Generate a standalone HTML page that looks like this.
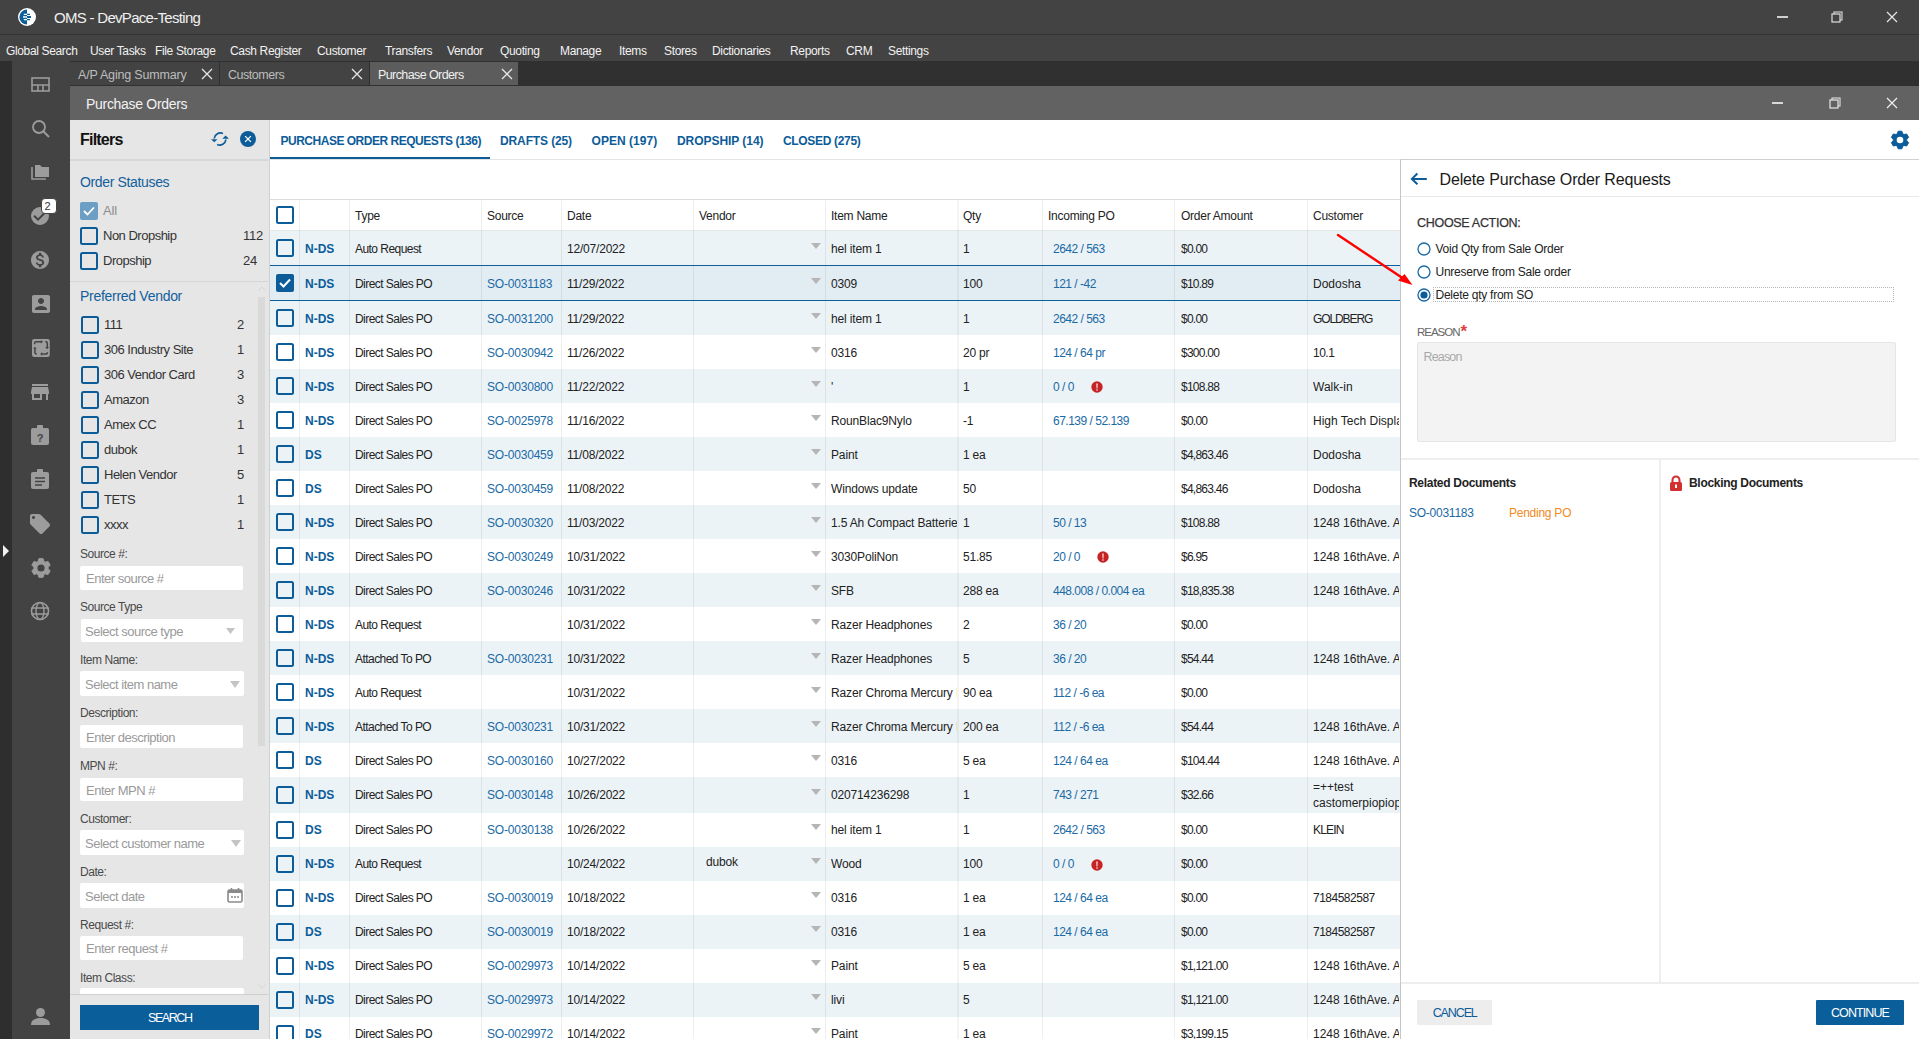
<!DOCTYPE html>
<html><head><meta charset="utf-8"><title>OMS - DevPace-Testing</title>
<style>
html,body{margin:0;padding:0;}
body{width:1919px;height:1039px;position:relative;overflow:hidden;background:#2e2e2e;font-family:"Liberation Sans", sans-serif;}
.r{position:absolute;}
.t{position:absolute;white-space:nowrap;}
svg.r{overflow:visible;}
</style></head><body>
<div class="r" style="left:0px;top:0px;width:1919px;height:34px;background:#434343;"></div>
<div class="r" style="left:0px;top:34px;width:1919px;height:1px;background:#333333;"></div>
<div class="r" style="left:0px;top:35px;width:1919px;height:26px;background:#434343;"></div>
<div class="r" style="left:0px;top:61px;width:12px;height:978px;background:#2e2e2e;"></div>
<div class="r" style="left:12px;top:61px;width:58px;height:978px;background:#434343;"></div>
<div class="r" style="left:70px;top:61px;width:1849px;height:25px;background:#303030;"></div>
<svg class="r" style="left:18px;top:8px" width="18" height="18" viewBox="0 0 18 18"><circle cx="9" cy="9" r="9" fill="#fff"/><path d="M9 1.4A7.6 7.6 0 0 0 9 16.6Z" fill="#0a5e9a"/><path d="M5.8 6.4H9M5 9H9M5.8 11.6H9" stroke="#fff" stroke-width="1.3"/><path d="M9 6.4H12M9 11.6H12" stroke="#0a5e9a" stroke-width="1.3"/><path d="M9 9H13" stroke="#0a5e9a" stroke-width="2"/></svg>
<div class="t" style="left:54px;top:6.5px;height:22px;line-height:22px;font-size:15px;color:#f0f0f0;letter-spacing:-0.7px;">OMS - DevPace-Testing</div>
<div class="r" style="left:1777px;top:16px;width:11px;height:2px;background:#cfcfcf;"></div>
<svg class="r" style="left:1831px;top:11px" width="12" height="12" viewBox="0 0 12 12"><rect x="3" y="1" width="8" height="8" fill="none" stroke="#cfcfcf" stroke-width="1.2"/><rect x="1" y="3" width="8" height="8" fill="#434343" stroke="#e0e0e0" stroke-width="1.2"/></svg>
<svg class="r" style="left:1886px;top:11px" width="12" height="12" viewBox="0 0 12 12"><path d="M1 1L11 11M11 1L1 11" stroke="#e8e8e8" stroke-width="1.2"/></svg>
<div class="t" style="left:6px;top:42.0px;height:18px;line-height:18px;font-size:12px;color:#f2f2f2;letter-spacing:-0.35px;">Global Search</div>
<div class="t" style="left:90px;top:42.0px;height:18px;line-height:18px;font-size:12px;color:#f2f2f2;letter-spacing:-0.35px;">User Tasks</div>
<div class="t" style="left:155px;top:42.0px;height:18px;line-height:18px;font-size:12px;color:#f2f2f2;letter-spacing:-0.35px;">File Storage</div>
<div class="t" style="left:230px;top:42.0px;height:18px;line-height:18px;font-size:12px;color:#f2f2f2;letter-spacing:-0.35px;">Cash Register</div>
<div class="t" style="left:317px;top:42.0px;height:18px;line-height:18px;font-size:12px;color:#f2f2f2;letter-spacing:-0.35px;">Customer</div>
<div class="t" style="left:385px;top:42.0px;height:18px;line-height:18px;font-size:12px;color:#f2f2f2;letter-spacing:-0.35px;">Transfers</div>
<div class="t" style="left:447px;top:42.0px;height:18px;line-height:18px;font-size:12px;color:#f2f2f2;letter-spacing:-0.35px;">Vendor</div>
<div class="t" style="left:500px;top:42.0px;height:18px;line-height:18px;font-size:12px;color:#f2f2f2;letter-spacing:-0.35px;">Quoting</div>
<div class="t" style="left:560px;top:42.0px;height:18px;line-height:18px;font-size:12px;color:#f2f2f2;letter-spacing:-0.35px;">Manage</div>
<div class="t" style="left:619px;top:42.0px;height:18px;line-height:18px;font-size:12px;color:#f2f2f2;letter-spacing:-0.35px;">Items</div>
<div class="t" style="left:664px;top:42.0px;height:18px;line-height:18px;font-size:12px;color:#f2f2f2;letter-spacing:-0.35px;">Stores</div>
<div class="t" style="left:712px;top:42.0px;height:18px;line-height:18px;font-size:12px;color:#f2f2f2;letter-spacing:-0.35px;">Dictionaries</div>
<div class="t" style="left:790px;top:42.0px;height:18px;line-height:18px;font-size:12px;color:#f2f2f2;letter-spacing:-0.35px;">Reports</div>
<div class="t" style="left:846px;top:42.0px;height:18px;line-height:18px;font-size:12px;color:#f2f2f2;letter-spacing:-0.35px;">CRM</div>
<div class="t" style="left:888px;top:42.0px;height:18px;line-height:18px;font-size:12px;color:#f2f2f2;letter-spacing:-0.35px;">Settings</div>
<div class="r" style="left:70px;top:62px;width:149px;height:23px;background:#434343;"></div>
<div class="r" style="left:220px;top:62px;width:149px;height:23px;background:#434343;"></div>
<div class="r" style="left:370px;top:62px;width:148px;height:23px;background:#5c5c5c;"></div>
<div class="t" style="left:78px;top:66.4px;height:18px;line-height:18px;font-size:12.5px;color:#bdbdbd;letter-spacing:-0.185px;">A/P Aging Summary</div>
<div class="t" style="left:228px;top:66.4px;height:18px;line-height:18px;font-size:12.5px;color:#bdbdbd;letter-spacing:-0.46px;">Customers</div>
<div class="t" style="left:378px;top:66.4px;height:18px;line-height:18px;font-size:12.5px;color:#f0f0f0;letter-spacing:-0.592px;">Purchase Orders</div>
<svg class="r" style="left:201px;top:68px" width="12" height="12" viewBox="0 0 12 12"><path d="M1 1L11 11M11 1L1 11" stroke="#e6e6e6" stroke-width="1.3"/></svg>
<svg class="r" style="left:351px;top:68px" width="12" height="12" viewBox="0 0 12 12"><path d="M1 1L11 11M11 1L1 11" stroke="#e6e6e6" stroke-width="1.3"/></svg>
<svg class="r" style="left:501px;top:68px" width="12" height="12" viewBox="0 0 12 12"><path d="M1 1L11 11M11 1L1 11" stroke="#e6e6e6" stroke-width="1.3"/></svg>
<div class="r" style="left:70px;top:86px;width:1849px;height:34px;background:#626262;"></div>
<div class="t" style="left:86px;top:93.5px;height:21px;line-height:21px;font-size:14px;color:#f2f2f2;letter-spacing:-0.3px;">Purchase Orders</div>
<div class="r" style="left:1772px;top:102px;width:11px;height:2px;background:#d8d8d8;"></div>
<svg class="r" style="left:1829px;top:97px" width="12" height="12" viewBox="0 0 12 12"><rect x="3" y="1" width="8" height="8" fill="none" stroke="#d8d8d8" stroke-width="1.2"/><rect x="1" y="3" width="8" height="8" fill="#626262" stroke="#e8e8e8" stroke-width="1.2"/></svg>
<svg class="r" style="left:1886px;top:97px" width="12" height="12" viewBox="0 0 12 12"><path d="M1 1L11 11M11 1L1 11" stroke="#f0f0f0" stroke-width="1.2"/></svg>
<div class="r" style="left:70px;top:120px;width:1849px;height:919px;background:#ffffff;"></div>
<svg class="r" style="left:31px;top:77px" width="19" height="15" viewBox="0 0 19 15"><rect x="1" y="1" width="17" height="13" fill="none" stroke="#9c9c9c" stroke-width="1.6"/><path d="M1 8h17M7 8v6M12 8v6" stroke="#9c9c9c" stroke-width="1.6"/></svg>
<svg class="r" style="left:31px;top:119px" width="19" height="19" viewBox="0 0 19 19"><circle cx="8" cy="8" r="6" fill="none" stroke="#9c9c9c" stroke-width="1.8"/><path d="M12.5 12.5L18 18" stroke="#9c9c9c" stroke-width="2"/></svg>
<svg class="r" style="left:31px;top:163px" width="19" height="17" viewBox="0 0 19 17"><path d="M1 4v12h14" fill="none" stroke="#9c9c9c" stroke-width="1.6"/><path d="M4 2h5l2 2h7v10H4z" fill="#9c9c9c"/></svg>
<svg class="r" style="left:28.4px;top:204.2px" width="24" height="24" viewBox="0 0 24 24"><path fill="#9c9c9c" d="M12 3a9 9 0 1 0 0 18 9 9 0 1 0 0-18zm-2 14l-4.6-4.6 1.4-1.4 3.2 3.2 7.2-7.2 1.4 1.4z"/></svg>
<div class="r" style="left:41px;top:198px;width:16px;height:16px;background:#fff;border-radius:4px;border:1px solid #434343;box-sizing:border-box"></div>
<div class="t" style="left:44.5px;top:198.0px;height:16px;line-height:16px;font-size:11px;color:#333;">2</div>
<svg class="r" style="left:28.4px;top:247.9px" width="24" height="24" viewBox="0 0 24 24"><path fill="#9c9c9c" transform="translate(12 12) scale(0.9) translate(-12 -12)" d="M12 2C6.48 2 2 6.48 2 12s4.48 10 10 10 10-4.48 10-10S17.52 2 12 2zm1.41 16.09V20h-2.67v-1.93c-1.710-.36-3.16-1.46-3.27-3.4h1.96c.1 1.05.82 1.87 2.65 1.870 1.96 0 2.4-.98 2.4-1.59 0-.83-.44-1.61-2.67-2.14-2.48-.6-4.18-1.62-4.18-3.67 0-1.72 1.39-2.84 3.11-3.21V4h2.67v1.95c1.86.45 2.79 1.86 2.85 3.39H14.3c-.05-1.11-.64-1.87-2.22-1.87-1.5 0-2.4.68-2.4 1.64 0 .84.65 1.39 2.67 1.91s4.18 1.39 4.18 3.91c-.01 1.83-1.38 2.83-3.12 3.16z"/></svg>
<svg class="r" style="left:28.5px;top:291.5px" width="24" height="24" viewBox="0 0 24 24"><path fill="#9c9c9c" d="M3 5v14c0 1.1.89 2 2 2h14c1.1 0 2-.9 2-2V5c0-1.1-.9-2-2-2H5c-1.11 0-2 .9-2 2zm12 4c0 1.66-1.34 3-3 3s-3-1.34-3-3 1.34-3 3-3 3 1.34 3 3zm-9 8c0-2 4-3.1 6-3.1s6 1.1 6 3.1v1H6v-1z"/></svg>
<svg class="r" style="left:31.5px;top:339px" width="18" height="18" viewBox="0 0 18 18"><rect x="0" y="0" width="17.8" height="17.9" rx="2.2" fill="#9c9c9c"/><g fill="none" stroke="#434343" stroke-width="1.5"><path d="M2.6 5.2V4.2Q2.6 2.7 4.1 2.7H9.2"/><path d="M13.3 2.4Q15.3 2.4 15.3 4.4V8.3"/><path d="M15.4 13.2Q15.4 15.1 13.5 15.1H10.2"/><path d="M4.8 15.1Q2.9 15.1 2.9 13.1V9.8"/></g><g fill="#434343"><path d="M8.9 0.9L11 2.8L8.9 4.6z"/><path d="M13.2 7.9H17L15.1 10.2z"/><path d="M10.2 13.1V17L8.2 15z"/><path d="M1.1 9.8H4.8L2.9 7.7z"/></g></svg>
<svg class="r" style="left:28.2px;top:380.2px" width="24" height="24" viewBox="0 0 24 24"><path fill="#9c9c9c" d="M20 4H4v2h16V4zm1 10v-2l-1-5H4l-1 5v2h1v6h10v-6h4v6h2v-6h1zm-9 4H6v-4h6v4z"/></svg>
<svg class="r" style="left:31px;top:425px" width="18" height="20" viewBox="0 0 18 20"><rect x="0" y="3" width="18" height="17" rx="2" fill="#9c9c9c"/><rect x="6" y="0" width="6" height="5" rx="1" fill="#9c9c9c"/><text x="9" y="16.5" text-anchor="middle" font-family="Liberation Sans" font-weight="700" font-size="11" fill="#434343">?</text></svg>
<svg class="r" style="left:31px;top:469px" width="18" height="20" viewBox="0 0 18 20"><rect x="0" y="3" width="18" height="17" rx="2" fill="#9c9c9c"/><rect x="6" y="0" width="6" height="5" rx="1" fill="#9c9c9c"/><path d="M4 9h10M4 12.5h10M4 16h7" stroke="#434343" stroke-width="1.5"/></svg>
<svg class="r" style="left:28px;top:511.75px" width="24" height="24" viewBox="0 0 24 24"><path fill="#9c9c9c" d="M21.41 11.58l-9-9C12.05 2.22 11.55 2 11 2H4c-1.1 0-2 .9-2 2v7c0 .55.22 1.05.59 1.42l9 9c.36.36.86.58 1.41.58.55 0 1.05-.22 1.41-.59l7-7c.37-.36.59-.86.59-1.41 0-.55-.23-1.06-.59-1.42zM5.5 7C4.67 7 4 6.330 4 5.5S4.67 4 5.5 4 7 4.67 7 5.5 6.33 7 5.5 7z"/></svg>
<svg class="r" style="left:28.6px;top:555.5px" width="24" height="24" viewBox="0 0 24 24"><path d="M9.09 5.42 L9.92 2.63 L14.08 2.63 L14.91 5.42 L16.24 6.18 L19.07 5.51 L21.16 9.12 L19.16 11.23 L19.16 12.77 L21.16 14.88 L19.07 18.49 L16.24 17.82 L14.91 18.58 L14.08 21.37 L9.92 21.37 L9.09 18.58 L7.76 17.82 L4.93 18.49 L2.84 14.88 L4.84 12.77 L4.84 11.23 L2.84 9.12 L4.93 5.51 L7.76 6.18Z" fill="#9c9c9c" stroke="#9c9c9c" stroke-width="1" stroke-linejoin="round"/><circle cx="12" cy="12" r="3.6" fill="#434343"/></svg>
<svg class="r" style="left:30px;top:601px" width="20" height="20" viewBox="0 0 20 20"><circle cx="10" cy="10" r="8.5" fill="none" stroke="#9c9c9c" stroke-width="1.6"/><ellipse cx="10" cy="10" rx="4" ry="8.5" fill="none" stroke="#9c9c9c" stroke-width="1.4"/><path d="M1.5 7h17M1.5 13h17" stroke="#9c9c9c" stroke-width="1.4"/></svg>
<svg class="r" style="left:3px;top:545px" width="6" height="12" viewBox="0 0 6 12"><path d="M0 0L6 6L0 12z" fill="#f0f0f0"/></svg>
<svg class="r" style="left:31px;top:1008px" width="19" height="17" viewBox="0 0 19 17"><circle cx="9.5" cy="4.5" r="4.5" fill="#9c9c9c"/><path d="M0 17c0-5 4-7 9.5-7S19 12 19 17z" fill="#9c9c9c"/></svg>
<div class="r" style="left:70px;top:120px;width:199px;height:919px;background:#e6e6e6;"></div>
<div class="r" style="left:269px;top:120px;width:1px;height:919px;background:#d0d0d0;"></div>
<div class="t" style="left:80px;top:128.0px;height:24px;line-height:24px;font-size:16px;color:#111;font-weight:700;letter-spacing:-0.788px;">Filters</div>
<svg class="r" style="left:205px;top:125px" width="30" height="30" viewBox="0 0 30 30"><path d="M18 8.6A6.2 6.2 0 0 0 9.2 13.5" fill="none" stroke="#0b5c99" stroke-width="1.7"/><path d="M12.1 19.5A6.2 6.2 0 0 0 20.9 14.5" fill="none" stroke="#0b5c99" stroke-width="1.7"/><path d="M6 14.2H12.5L9.3 17.2z" fill="#0b5c99"/><path d="M17.3 13.7H24L20.6 10.6z" fill="#0b5c99"/></svg>
<svg class="r" style="left:239.9px;top:130.9px" width="16" height="16" viewBox="0 0 16 16"><circle cx="8" cy="8" r="8" fill="#0b5c99"/><path d="M5.1 5.1l5.8 5.8M10.9 5.1l-5.8 5.8" stroke="#fff" stroke-width="1.3"/></svg>
<div class="r" style="left:70px;top:159px;width:198px;height:2px;background:#d6d6d6;"></div>
<div class="t" style="left:80px;top:171.5px;height:21px;line-height:21px;font-size:14px;color:#12609c;letter-spacing:-0.35px;">Order Statuses</div>
<div class="r" style="left:80px;top:202px;width:18px;height:18px;background:#6d9fc4;border-radius:2px"></div>
<svg class="r" style="left:83px;top:206px" width="12" height="10" viewBox="0 0 12 10"><path d="M1 5l3.5 3.5L11 1.5" fill="none" stroke="#fff" stroke-width="1.8"/></svg>
<div class="t" style="left:103px;top:201.0px;height:19px;line-height:19px;font-size:13px;color:#8c8c8c;letter-spacing:-0.2px;">All</div>
<div class="r" style="left:80px;top:227px;width:18px;height:18px;border:2px solid #0b5c99;border-radius:2.5px;box-sizing:border-box;background:#fff0"></div>
<div class="t" style="left:103px;top:226.0px;height:19px;line-height:19px;font-size:13px;color:#333;letter-spacing:-0.5px;">Non Dropship</div>
<div class="t" style="left:243px;top:226.0px;height:19px;line-height:19px;font-size:13px;color:#333;letter-spacing:-0.3px;">112</div>
<div class="r" style="left:80px;top:252px;width:18px;height:18px;border:2px solid #0b5c99;border-radius:2.5px;box-sizing:border-box;background:#fff0"></div>
<div class="t" style="left:103px;top:251.0px;height:19px;line-height:19px;font-size:13px;color:#333;letter-spacing:-0.5px;">Dropship</div>
<div class="t" style="left:243px;top:251.0px;height:19px;line-height:19px;font-size:13px;color:#333;letter-spacing:-0.3px;">24</div>
<div class="r" style="left:70px;top:281px;width:198px;height:1px;background:#d6d6d6;"></div>
<div class="t" style="left:80px;top:286.0px;height:21px;line-height:21px;font-size:14px;color:#12609c;letter-spacing:-0.289px;">Preferred Vendor</div>
<div class="r" style="left:258px;top:297px;width:7px;height:449px;background:#d9d9d9;"></div>
<svg class="r" style="left:258px;top:286px" width="8" height="5" viewBox="0 0 8 5"><path d="M0.5 4.5L4 1L7.5 4.5" fill="none" stroke="#d6d6d6" stroke-width="1"/></svg>
<svg class="r" style="left:258px;top:984px" width="8" height="5" viewBox="0 0 8 5"><path d="M0.5 0.5L4 4L7.5 0.5" fill="none" stroke="#d6d6d6" stroke-width="1"/></svg>
<div class="r" style="left:81px;top:316px;width:18px;height:18px;border:2px solid #0b5c99;border-radius:2.5px;box-sizing:border-box;background:#fff0"></div>
<div class="t" style="left:104px;top:315.0px;height:19px;line-height:19px;font-size:13px;color:#333;letter-spacing:-0.5px;">111</div>
<div class="t" style="left:237px;top:315.0px;height:19px;line-height:19px;font-size:13px;color:#333;">2</div>
<div class="r" style="left:81px;top:341px;width:18px;height:18px;border:2px solid #0b5c99;border-radius:2.5px;box-sizing:border-box;background:#fff0"></div>
<div class="t" style="left:104px;top:340.0px;height:19px;line-height:19px;font-size:13px;color:#333;letter-spacing:-0.5px;">306 Industry Site</div>
<div class="t" style="left:237px;top:340.0px;height:19px;line-height:19px;font-size:13px;color:#333;">1</div>
<div class="r" style="left:81px;top:366px;width:18px;height:18px;border:2px solid #0b5c99;border-radius:2.5px;box-sizing:border-box;background:#fff0"></div>
<div class="t" style="left:104px;top:365.0px;height:19px;line-height:19px;font-size:13px;color:#333;letter-spacing:-0.5px;">306 Vendor Card</div>
<div class="t" style="left:237px;top:365.0px;height:19px;line-height:19px;font-size:13px;color:#333;">3</div>
<div class="r" style="left:81px;top:391px;width:18px;height:18px;border:2px solid #0b5c99;border-radius:2.5px;box-sizing:border-box;background:#fff0"></div>
<div class="t" style="left:104px;top:390.0px;height:19px;line-height:19px;font-size:13px;color:#333;letter-spacing:-0.5px;">Amazon</div>
<div class="t" style="left:237px;top:390.0px;height:19px;line-height:19px;font-size:13px;color:#333;">3</div>
<div class="r" style="left:81px;top:416px;width:18px;height:18px;border:2px solid #0b5c99;border-radius:2.5px;box-sizing:border-box;background:#fff0"></div>
<div class="t" style="left:104px;top:415.0px;height:19px;line-height:19px;font-size:13px;color:#333;letter-spacing:-0.5px;">Amex CC</div>
<div class="t" style="left:237px;top:415.0px;height:19px;line-height:19px;font-size:13px;color:#333;">1</div>
<div class="r" style="left:81px;top:441px;width:18px;height:18px;border:2px solid #0b5c99;border-radius:2.5px;box-sizing:border-box;background:#fff0"></div>
<div class="t" style="left:104px;top:440.0px;height:19px;line-height:19px;font-size:13px;color:#333;letter-spacing:-0.5px;">dubok</div>
<div class="t" style="left:237px;top:440.0px;height:19px;line-height:19px;font-size:13px;color:#333;">1</div>
<div class="r" style="left:81px;top:466px;width:18px;height:18px;border:2px solid #0b5c99;border-radius:2.5px;box-sizing:border-box;background:#fff0"></div>
<div class="t" style="left:104px;top:465.0px;height:19px;line-height:19px;font-size:13px;color:#333;letter-spacing:-0.5px;">Helen Vendor</div>
<div class="t" style="left:237px;top:465.0px;height:19px;line-height:19px;font-size:13px;color:#333;">5</div>
<div class="r" style="left:81px;top:491px;width:18px;height:18px;border:2px solid #0b5c99;border-radius:2.5px;box-sizing:border-box;background:#fff0"></div>
<div class="t" style="left:104px;top:490.0px;height:19px;line-height:19px;font-size:13px;color:#333;letter-spacing:-0.5px;">TETS</div>
<div class="t" style="left:237px;top:490.0px;height:19px;line-height:19px;font-size:13px;color:#333;">1</div>
<div class="r" style="left:81px;top:516px;width:18px;height:18px;border:2px solid #0b5c99;border-radius:2.5px;box-sizing:border-box;background:#fff0"></div>
<div class="t" style="left:104px;top:515.0px;height:19px;line-height:19px;font-size:13px;color:#333;letter-spacing:-0.5px;">xxxx</div>
<div class="t" style="left:237px;top:515.0px;height:19px;line-height:19px;font-size:13px;color:#333;">1</div>
<div class="t" style="left:80px;top:545.0px;height:18px;line-height:18px;font-size:12px;color:#4a4a4a;letter-spacing:-0.45px;">Source #:</div>
<div class="r" style="left:80px;top:566px;width:163px;height:24px;background:#ffffff;border-radius:2px"></div>
<div class="t" style="left:86px;top:569.0px;height:19px;line-height:19px;font-size:13px;color:#9a9a9a;letter-spacing:-0.5px;">Enter source #</div>
<div class="t" style="left:80px;top:598.0px;height:18px;line-height:18px;font-size:12px;color:#4a4a4a;letter-spacing:-0.45px;">Source Type</div>
<div class="r" style="left:81px;top:619px;width:162px;height:23px;background:#ffffff;border-radius:2px"></div>
<div class="t" style="left:85px;top:621.5px;height:19px;line-height:19px;font-size:13px;color:#9a9a9a;letter-spacing:-0.5px;">Select source type</div>
<svg class="r" style="left:226px;top:628px" width="9" height="6" viewBox="0 0 9 6"><path d="M0 0h9L4.5 6z" fill="#c4c4c4"/></svg>
<div class="t" style="left:80px;top:651.0px;height:18px;line-height:18px;font-size:12px;color:#4a4a4a;letter-spacing:-0.45px;">Item Name:</div>
<div class="r" style="left:80px;top:671px;width:164px;height:25px;background:#ffffff;border-radius:2px"></div>
<div class="t" style="left:85px;top:674.5px;height:19px;line-height:19px;font-size:13px;color:#9a9a9a;letter-spacing:-0.5px;">Select item name</div>
<svg class="r" style="left:230px;top:681px" width="10" height="7" viewBox="0 0 10 7"><path d="M0 0h10L5.0 7z" fill="#c4c4c4"/></svg>
<div class="t" style="left:80px;top:704.0px;height:18px;line-height:18px;font-size:12px;color:#4a4a4a;letter-spacing:-0.45px;">Description:</div>
<div class="r" style="left:80px;top:725px;width:163px;height:23px;background:#ffffff;border-radius:2px"></div>
<div class="t" style="left:86px;top:727.5px;height:19px;line-height:19px;font-size:13px;color:#9a9a9a;letter-spacing:-0.5px;">Enter description</div>
<div class="t" style="left:80px;top:757.0px;height:18px;line-height:18px;font-size:12px;color:#4a4a4a;letter-spacing:-0.45px;">MPN #:</div>
<div class="r" style="left:80px;top:778px;width:163px;height:23px;background:#ffffff;border-radius:2px"></div>
<div class="t" style="left:86px;top:780.5px;height:19px;line-height:19px;font-size:13px;color:#9a9a9a;letter-spacing:-0.5px;">Enter MPN #</div>
<div class="t" style="left:80px;top:810.0px;height:18px;line-height:18px;font-size:12px;color:#4a4a4a;letter-spacing:-0.45px;">Customer:</div>
<div class="r" style="left:80px;top:830px;width:164px;height:25px;background:#ffffff;border-radius:2px"></div>
<div class="t" style="left:85px;top:833.5px;height:19px;line-height:19px;font-size:13px;color:#9a9a9a;letter-spacing:-0.5px;">Select customer name</div>
<svg class="r" style="left:230.5px;top:840px" width="10" height="7" viewBox="0 0 10 7"><path d="M0 0h10L5.0 7z" fill="#c4c4c4"/></svg>
<div class="t" style="left:80px;top:863.0px;height:18px;line-height:18px;font-size:12px;color:#4a4a4a;letter-spacing:-0.45px;">Date:</div>
<div class="r" style="left:80px;top:883px;width:164px;height:25px;background:#ffffff;border-radius:2px"></div>
<div class="t" style="left:85px;top:886.5px;height:19px;line-height:19px;font-size:13px;color:#9a9a9a;letter-spacing:-0.5px;">Select date</div>
<svg class="r" style="left:227px;top:887px" width="16" height="16" viewBox="0 0 16 16"><rect x="1" y="3" width="14" height="12" rx="1.5" fill="none" stroke="#8a8a8a" stroke-width="1.6"/><rect x="1" y="3" width="14" height="3" fill="#8a8a8a"/><path d="M4.5 1v3M11.5 1v3" stroke="#8a8a8a" stroke-width="1.6"/><path d="M4 10h2M7 10h2M10 10h2" stroke="#8a8a8a" stroke-width="1.4"/></svg>
<div class="t" style="left:80px;top:916.0px;height:18px;line-height:18px;font-size:12px;color:#4a4a4a;letter-spacing:-0.45px;">Request #:</div>
<div class="r" style="left:80px;top:936px;width:163px;height:24px;background:#ffffff;border-radius:2px"></div>
<div class="t" style="left:86px;top:939.0px;height:19px;line-height:19px;font-size:13px;color:#9a9a9a;letter-spacing:-0.5px;">Enter request #</div>
<div class="t" style="left:80px;top:969.0px;height:18px;line-height:18px;font-size:12px;color:#4a4a4a;letter-spacing:-0.45px;">Item Class:</div>
<div class="r" style="left:80px;top:988px;width:164px;height:6px;background:#ffffff;border-radius:2px 2px 0 0"></div>
<div class="r" style="left:70px;top:994px;width:198px;height:1px;background:#cfcfcf;"></div>
<div class="r" style="left:80px;top:1005px;width:179px;height:25px;background:#0a5e9a;"></div>
<div class="t" style="left:148px;top:1009.4px;height:18px;line-height:18px;font-size:12.5px;color:#fff;letter-spacing:-1.432px;">SEARCH</div>
<div class="r" style="left:270px;top:159px;width:1649px;height:1px;background:#e3e3e3;"></div>
<div class="r" style="left:270px;top:157px;width:220px;height:2px;background:#0b5c99;"></div>
<div class="t" style="left:280.5px;top:131.6px;height:18px;line-height:18px;font-size:12px;color:#0b5c99;font-weight:700;letter-spacing:-0.49px;">PURCHASE ORDER REQUESTS (136)</div>
<div class="t" style="left:500px;top:131.6px;height:18px;line-height:18px;font-size:12px;color:#0b5c99;font-weight:700;letter-spacing:-0.122px;">DRAFTS (25)</div>
<div class="t" style="left:591.5px;top:131.6px;height:18px;line-height:18px;font-size:12px;color:#0b5c99;font-weight:700;letter-spacing:0.044px;">OPEN (197)</div>
<div class="t" style="left:677px;top:131.6px;height:18px;line-height:18px;font-size:12px;color:#0b5c99;font-weight:700;letter-spacing:-0.049px;">DROPSHIP (14)</div>
<div class="t" style="left:783px;top:131.6px;height:18px;line-height:18px;font-size:12px;color:#0b5c99;font-weight:700;letter-spacing:-0.33px;">CLOSED (275)</div>
<svg class="r" style="left:1888px;top:128.2px" width="24" height="24" viewBox="0 0 24 24"><path d="M9.28 5.77 L10.11 3.20 L13.89 3.20 L14.72 5.77 L16.04 6.53 L18.68 5.97 L20.56 9.23 L18.76 11.24 L18.76 12.76 L20.56 14.77 L18.68 18.03 L16.04 17.47 L14.72 18.23 L13.89 20.80 L10.11 20.80 L9.28 18.23 L7.96 17.47 L5.32 18.03 L3.44 14.77 L5.24 12.76 L5.24 11.24 L3.44 9.23 L5.32 5.97 L7.96 6.53Z" fill="#0b5c99" stroke="#0b5c99" stroke-width="1" stroke-linejoin="round"/><circle cx="12" cy="12" r="3.3" fill="#ffffff"/></svg>
<div class="r" style="left:270px;top:199px;width:1130px;height:1px;background:#dcdcdc;"></div>
<div class="r" style="left:270px;top:230px;width:1130px;height:1px;background:#e6e6e6;"></div>
<div class="r" style="left:276px;top:206px;width:18px;height:18px;border:2px solid #0b5c99;border-radius:2.5px;box-sizing:border-box;background:#fff0"></div>
<div class="t" style="left:355px;top:206.5px;height:18px;line-height:18px;font-size:12px;color:#222;letter-spacing:-0.25px;">Type</div>
<div class="t" style="left:487px;top:206.5px;height:18px;line-height:18px;font-size:12px;color:#222;letter-spacing:-0.25px;">Source</div>
<div class="t" style="left:567px;top:206.5px;height:18px;line-height:18px;font-size:12px;color:#222;letter-spacing:-0.25px;">Date</div>
<div class="t" style="left:699px;top:206.5px;height:18px;line-height:18px;font-size:12px;color:#222;letter-spacing:-0.25px;">Vendor</div>
<div class="t" style="left:831px;top:206.5px;height:18px;line-height:18px;font-size:12px;color:#222;letter-spacing:-0.25px;">Item Name</div>
<div class="t" style="left:963px;top:206.5px;height:18px;line-height:18px;font-size:12px;color:#222;letter-spacing:-0.25px;">Qty</div>
<div class="t" style="left:1048px;top:206.5px;height:18px;line-height:18px;font-size:12px;color:#222;letter-spacing:-0.25px;">Incoming PO</div>
<div class="t" style="left:1181px;top:206.5px;height:18px;line-height:18px;font-size:12px;color:#222;letter-spacing:-0.25px;">Order Amount</div>
<div class="t" style="left:1313px;top:206.5px;height:18px;line-height:18px;font-size:12px;color:#222;letter-spacing:-0.25px;">Customer</div>
<div class="r" style="left:270px;top:231px;width:1130px;height:808px;overflow:hidden">
<div class="r" style="left:0px;top:0px;width:1130px;height:34px;background:#ecf3f7;"></div>
<div class="r" style="left:0px;top:34px;width:1130px;height:36px;background:#e2ecf3;"></div>
<div class="r" style="left:0px;top:70px;width:1130px;height:34px;background:#ecf3f7;"></div>
<div class="r" style="left:0px;top:104px;width:1130px;height:34px;background:#ffffff;"></div>
<div class="r" style="left:0px;top:138px;width:1130px;height:34px;background:#ecf3f7;"></div>
<div class="r" style="left:0px;top:172px;width:1130px;height:34px;background:#ffffff;"></div>
<div class="r" style="left:0px;top:206px;width:1130px;height:34px;background:#ecf3f7;"></div>
<div class="r" style="left:0px;top:240px;width:1130px;height:34px;background:#ffffff;"></div>
<div class="r" style="left:0px;top:274px;width:1130px;height:34px;background:#ecf3f7;"></div>
<div class="r" style="left:0px;top:308px;width:1130px;height:34px;background:#ffffff;"></div>
<div class="r" style="left:0px;top:342px;width:1130px;height:34px;background:#ecf3f7;"></div>
<div class="r" style="left:0px;top:376px;width:1130px;height:34px;background:#ffffff;"></div>
<div class="r" style="left:0px;top:410px;width:1130px;height:34px;background:#ecf3f7;"></div>
<div class="r" style="left:0px;top:444px;width:1130px;height:34px;background:#ffffff;"></div>
<div class="r" style="left:0px;top:478px;width:1130px;height:34px;background:#ecf3f7;"></div>
<div class="r" style="left:0px;top:512px;width:1130px;height:34px;background:#ffffff;"></div>
<div class="r" style="left:0px;top:546px;width:1130px;height:36px;background:#ecf3f7;"></div>
<div class="r" style="left:0px;top:582px;width:1130px;height:34px;background:#ffffff;"></div>
<div class="r" style="left:0px;top:616px;width:1130px;height:34px;background:#ecf3f7;"></div>
<div class="r" style="left:0px;top:650px;width:1130px;height:34px;background:#ffffff;"></div>
<div class="r" style="left:0px;top:684px;width:1130px;height:34px;background:#ecf3f7;"></div>
<div class="r" style="left:0px;top:718px;width:1130px;height:34px;background:#ffffff;"></div>
<div class="r" style="left:0px;top:752px;width:1130px;height:34px;background:#ecf3f7;"></div>
<div class="r" style="left:0px;top:786px;width:1130px;height:34px;background:#ffffff;"></div>
</div>
<div class="r" style="left:299px;top:200px;width:1px;height:839px;background:rgba(0,0,0,0.065);"></div>
<div class="r" style="left:349px;top:200px;width:1px;height:839px;background:rgba(0,0,0,0.065);"></div>
<div class="r" style="left:481px;top:200px;width:1px;height:839px;background:rgba(0,0,0,0.065);"></div>
<div class="r" style="left:561px;top:200px;width:1px;height:839px;background:rgba(0,0,0,0.065);"></div>
<div class="r" style="left:693px;top:200px;width:1px;height:839px;background:rgba(0,0,0,0.065);"></div>
<div class="r" style="left:825px;top:200px;width:1px;height:839px;background:rgba(0,0,0,0.065);"></div>
<div class="r" style="left:957px;top:200px;width:2px;height:839px;background:rgba(0,0,0,0.045);"></div>
<div class="r" style="left:1042px;top:200px;width:1px;height:839px;background:rgba(0,0,0,0.065);"></div>
<div class="r" style="left:1174px;top:200px;width:1px;height:839px;background:rgba(0,0,0,0.065);"></div>
<div class="r" style="left:1307px;top:200px;width:1px;height:839px;background:rgba(0,0,0,0.065);"></div>
<div class="r" style="left:270px;top:265px;width:1130px;height:1px;background:#0d5f9a;"></div>
<div class="r" style="left:270px;top:300px;width:1130px;height:1px;background:#0d5f9a;"></div>
<div class="r" style="left:276px;top:239px;width:18px;height:18px;border:2px solid #0b5c99;border-radius:2.5px;box-sizing:border-box;background:#fff0"></div>
<div class="t" style="left:305px;top:240.0px;height:18px;line-height:18px;width:44px;overflow:hidden;font-size:12px;color:#0b5c99;font-weight:700;letter-spacing:0px">N-DS</div>
<div class="t" style="left:355px;top:240.0px;height:18px;line-height:18px;width:126px;overflow:hidden;font-size:12px;color:#222;letter-spacing:-0.55px">Auto Request</div>
<div class="t" style="left:567px;top:240.0px;height:18px;line-height:18px;width:126px;overflow:hidden;font-size:12px;color:#222;letter-spacing:-0.2px">12/07/2022</div>
<svg class="r" style="left:811px;top:243px" width="10" height="6" viewBox="0 0 10 6"><path d="M0 0h10L5 6z" fill="#b5b5b5"/></svg>
<div class="t" style="left:831px;top:240.0px;height:18px;line-height:18px;width:126px;overflow:hidden;font-size:12px;color:#222;letter-spacing:-0.15px">hel item 1</div>
<div class="t" style="left:963px;top:240.0px;height:18px;line-height:18px;width:79px;overflow:hidden;font-size:12px;color:#222;letter-spacing:-0.2px">1</div>
<div class="t" style="left:1053px;top:240.0px;height:18px;line-height:18px;width:121px;overflow:hidden;font-size:12px;color:#1a6aa5;letter-spacing:-0.5px">2642 / 563</div>
<div class="t" style="left:1181px;top:240.0px;height:18px;line-height:18px;width:126px;overflow:hidden;font-size:12px;color:#222;letter-spacing:-0.75px">$0.00</div>
<div class="r" style="left:276px;top:274px;width:18px;height:18px;background:#0b5c99;border-radius:2px"></div>
<svg class="r" style="left:279px;top:278px" width="12" height="10" viewBox="0 0 12 10"><path d="M1 5l3.5 3.5L11 1.5" fill="none" stroke="#fff" stroke-width="2"/></svg>
<div class="t" style="left:305px;top:275.0px;height:18px;line-height:18px;width:44px;overflow:hidden;font-size:12px;color:#0b5c99;font-weight:700;letter-spacing:0px">N-DS</div>
<div class="t" style="left:355px;top:275.0px;height:18px;line-height:18px;width:126px;overflow:hidden;font-size:12px;color:#222;letter-spacing:-0.55px">Direct Sales PO</div>
<div class="t" style="left:487px;top:275.0px;height:18px;line-height:18px;width:74px;overflow:hidden;font-size:12px;color:#1a6aa5;letter-spacing:-0.2px">SO-0031183</div>
<div class="t" style="left:567px;top:275.0px;height:18px;line-height:18px;width:126px;overflow:hidden;font-size:12px;color:#222;letter-spacing:-0.2px">11/29/2022</div>
<svg class="r" style="left:811px;top:278px" width="10" height="6" viewBox="0 0 10 6"><path d="M0 0h10L5 6z" fill="#b5b5b5"/></svg>
<div class="t" style="left:831px;top:275.0px;height:18px;line-height:18px;width:126px;overflow:hidden;font-size:12px;color:#222;letter-spacing:-0.15px">0309</div>
<div class="t" style="left:963px;top:275.0px;height:18px;line-height:18px;width:79px;overflow:hidden;font-size:12px;color:#222;letter-spacing:-0.2px">100</div>
<div class="t" style="left:1053px;top:275.0px;height:18px;line-height:18px;width:121px;overflow:hidden;font-size:12px;color:#1a6aa5;letter-spacing:-0.5px">121 / -42</div>
<div class="t" style="left:1181px;top:275.0px;height:18px;line-height:18px;width:126px;overflow:hidden;font-size:12px;color:#222;letter-spacing:-0.75px">$10.89</div>
<div class="t" style="left:1313px;top:275.0px;height:18px;line-height:18px;width:86px;overflow:hidden;font-size:12px;color:#222;letter-spacing:0px">Dodosha</div>
<div class="r" style="left:276px;top:309px;width:18px;height:18px;border:2px solid #0b5c99;border-radius:2.5px;box-sizing:border-box;background:#fff0"></div>
<div class="t" style="left:305px;top:310.0px;height:18px;line-height:18px;width:44px;overflow:hidden;font-size:12px;color:#0b5c99;font-weight:700;letter-spacing:0px">N-DS</div>
<div class="t" style="left:355px;top:310.0px;height:18px;line-height:18px;width:126px;overflow:hidden;font-size:12px;color:#222;letter-spacing:-0.55px">Direct Sales PO</div>
<div class="t" style="left:487px;top:310.0px;height:18px;line-height:18px;width:74px;overflow:hidden;font-size:12px;color:#1a6aa5;letter-spacing:-0.2px">SO-0031200</div>
<div class="t" style="left:567px;top:310.0px;height:18px;line-height:18px;width:126px;overflow:hidden;font-size:12px;color:#222;letter-spacing:-0.2px">11/29/2022</div>
<svg class="r" style="left:811px;top:313px" width="10" height="6" viewBox="0 0 10 6"><path d="M0 0h10L5 6z" fill="#b5b5b5"/></svg>
<div class="t" style="left:831px;top:310.0px;height:18px;line-height:18px;width:126px;overflow:hidden;font-size:12px;color:#222;letter-spacing:-0.15px">hel item 1</div>
<div class="t" style="left:963px;top:310.0px;height:18px;line-height:18px;width:79px;overflow:hidden;font-size:12px;color:#222;letter-spacing:-0.2px">1</div>
<div class="t" style="left:1053px;top:310.0px;height:18px;line-height:18px;width:121px;overflow:hidden;font-size:12px;color:#1a6aa5;letter-spacing:-0.5px">2642 / 563</div>
<div class="t" style="left:1181px;top:310.0px;height:18px;line-height:18px;width:126px;overflow:hidden;font-size:12px;color:#222;letter-spacing:-0.75px">$0.00</div>
<div class="t" style="left:1313px;top:310.0px;height:18px;line-height:18px;width:86px;overflow:hidden;font-size:12px;color:#222;letter-spacing:-1.1px">GOLDBERG</div>
<div class="r" style="left:276px;top:343px;width:18px;height:18px;border:2px solid #0b5c99;border-radius:2.5px;box-sizing:border-box;background:#fff0"></div>
<div class="t" style="left:305px;top:344.0px;height:18px;line-height:18px;width:44px;overflow:hidden;font-size:12px;color:#0b5c99;font-weight:700;letter-spacing:0px">N-DS</div>
<div class="t" style="left:355px;top:344.0px;height:18px;line-height:18px;width:126px;overflow:hidden;font-size:12px;color:#222;letter-spacing:-0.55px">Direct Sales PO</div>
<div class="t" style="left:487px;top:344.0px;height:18px;line-height:18px;width:74px;overflow:hidden;font-size:12px;color:#1a6aa5;letter-spacing:-0.2px">SO-0030942</div>
<div class="t" style="left:567px;top:344.0px;height:18px;line-height:18px;width:126px;overflow:hidden;font-size:12px;color:#222;letter-spacing:-0.2px">11/26/2022</div>
<svg class="r" style="left:811px;top:347px" width="10" height="6" viewBox="0 0 10 6"><path d="M0 0h10L5 6z" fill="#b5b5b5"/></svg>
<div class="t" style="left:831px;top:344.0px;height:18px;line-height:18px;width:126px;overflow:hidden;font-size:12px;color:#222;letter-spacing:-0.15px">0316</div>
<div class="t" style="left:963px;top:344.0px;height:18px;line-height:18px;width:79px;overflow:hidden;font-size:12px;color:#222;letter-spacing:-0.2px">20 pr</div>
<div class="t" style="left:1053px;top:344.0px;height:18px;line-height:18px;width:121px;overflow:hidden;font-size:12px;color:#1a6aa5;letter-spacing:-0.5px">124 / 64 pr</div>
<div class="t" style="left:1181px;top:344.0px;height:18px;line-height:18px;width:126px;overflow:hidden;font-size:12px;color:#222;letter-spacing:-0.75px">$300.00</div>
<div class="t" style="left:1313px;top:344.0px;height:18px;line-height:18px;width:86px;overflow:hidden;font-size:12px;color:#222;letter-spacing:-0.5px">10.1</div>
<div class="r" style="left:276px;top:377px;width:18px;height:18px;border:2px solid #0b5c99;border-radius:2.5px;box-sizing:border-box;background:#fff0"></div>
<div class="t" style="left:305px;top:378.0px;height:18px;line-height:18px;width:44px;overflow:hidden;font-size:12px;color:#0b5c99;font-weight:700;letter-spacing:0px">N-DS</div>
<div class="t" style="left:355px;top:378.0px;height:18px;line-height:18px;width:126px;overflow:hidden;font-size:12px;color:#222;letter-spacing:-0.55px">Direct Sales PO</div>
<div class="t" style="left:487px;top:378.0px;height:18px;line-height:18px;width:74px;overflow:hidden;font-size:12px;color:#1a6aa5;letter-spacing:-0.2px">SO-0030800</div>
<div class="t" style="left:567px;top:378.0px;height:18px;line-height:18px;width:126px;overflow:hidden;font-size:12px;color:#222;letter-spacing:-0.2px">11/22/2022</div>
<svg class="r" style="left:811px;top:381px" width="10" height="6" viewBox="0 0 10 6"><path d="M0 0h10L5 6z" fill="#b5b5b5"/></svg>
<div class="t" style="left:831px;top:378.0px;height:18px;line-height:18px;width:126px;overflow:hidden;font-size:12px;color:#222;letter-spacing:-0.15px">&#x27;</div>
<div class="t" style="left:963px;top:378.0px;height:18px;line-height:18px;width:79px;overflow:hidden;font-size:12px;color:#222;letter-spacing:-0.2px">1</div>
<div class="t" style="left:1053px;top:378.0px;height:18px;line-height:18px;width:121px;overflow:hidden;font-size:12px;color:#1a6aa5;letter-spacing:-0.5px">0 / 0</div>
<svg class="r" style="left:1090.5px;top:380.5px" width="12" height="12" viewBox="0 0 12 12"><circle cx="6" cy="6" r="5.7" fill="#c62424"/><path d="M5.35 2.6h1.3l-.25 5h-.8z" fill="#fff"/><circle cx="6" cy="9" r=".75" fill="#fff"/></svg>
<div class="t" style="left:1181px;top:378.0px;height:18px;line-height:18px;width:126px;overflow:hidden;font-size:12px;color:#222;letter-spacing:-0.75px">$108.88</div>
<div class="t" style="left:1313px;top:378.0px;height:18px;line-height:18px;width:86px;overflow:hidden;font-size:12px;color:#222;letter-spacing:0px">Walk-in</div>
<div class="r" style="left:276px;top:411px;width:18px;height:18px;border:2px solid #0b5c99;border-radius:2.5px;box-sizing:border-box;background:#fff0"></div>
<div class="t" style="left:305px;top:412.0px;height:18px;line-height:18px;width:44px;overflow:hidden;font-size:12px;color:#0b5c99;font-weight:700;letter-spacing:0px">N-DS</div>
<div class="t" style="left:355px;top:412.0px;height:18px;line-height:18px;width:126px;overflow:hidden;font-size:12px;color:#222;letter-spacing:-0.55px">Direct Sales PO</div>
<div class="t" style="left:487px;top:412.0px;height:18px;line-height:18px;width:74px;overflow:hidden;font-size:12px;color:#1a6aa5;letter-spacing:-0.2px">SO-0025978</div>
<div class="t" style="left:567px;top:412.0px;height:18px;line-height:18px;width:126px;overflow:hidden;font-size:12px;color:#222;letter-spacing:-0.2px">11/16/2022</div>
<svg class="r" style="left:811px;top:415px" width="10" height="6" viewBox="0 0 10 6"><path d="M0 0h10L5 6z" fill="#b5b5b5"/></svg>
<div class="t" style="left:831px;top:412.0px;height:18px;line-height:18px;width:126px;overflow:hidden;font-size:12px;color:#222;letter-spacing:-0.15px">RounBlac9Nylo</div>
<div class="t" style="left:963px;top:412.0px;height:18px;line-height:18px;width:79px;overflow:hidden;font-size:12px;color:#222;letter-spacing:-0.2px">-1</div>
<div class="t" style="left:1053px;top:412.0px;height:18px;line-height:18px;width:121px;overflow:hidden;font-size:12px;color:#1a6aa5;letter-spacing:-0.5px">67.139 / 52.139</div>
<div class="t" style="left:1181px;top:412.0px;height:18px;line-height:18px;width:126px;overflow:hidden;font-size:12px;color:#222;letter-spacing:-0.75px">$0.00</div>
<div class="t" style="left:1313px;top:412.0px;height:18px;line-height:18px;width:86px;overflow:hidden;font-size:12px;color:#222;letter-spacing:0px">High Tech Displa</div>
<div class="r" style="left:276px;top:445px;width:18px;height:18px;border:2px solid #0b5c99;border-radius:2.5px;box-sizing:border-box;background:#fff0"></div>
<div class="t" style="left:305px;top:446.0px;height:18px;line-height:18px;width:44px;overflow:hidden;font-size:12px;color:#0b5c99;font-weight:700;letter-spacing:0px">DS</div>
<div class="t" style="left:355px;top:446.0px;height:18px;line-height:18px;width:126px;overflow:hidden;font-size:12px;color:#222;letter-spacing:-0.55px">Direct Sales PO</div>
<div class="t" style="left:487px;top:446.0px;height:18px;line-height:18px;width:74px;overflow:hidden;font-size:12px;color:#1a6aa5;letter-spacing:-0.2px">SO-0030459</div>
<div class="t" style="left:567px;top:446.0px;height:18px;line-height:18px;width:126px;overflow:hidden;font-size:12px;color:#222;letter-spacing:-0.2px">11/08/2022</div>
<svg class="r" style="left:811px;top:449px" width="10" height="6" viewBox="0 0 10 6"><path d="M0 0h10L5 6z" fill="#b5b5b5"/></svg>
<div class="t" style="left:831px;top:446.0px;height:18px;line-height:18px;width:126px;overflow:hidden;font-size:12px;color:#222;letter-spacing:-0.15px">Paint</div>
<div class="t" style="left:963px;top:446.0px;height:18px;line-height:18px;width:79px;overflow:hidden;font-size:12px;color:#222;letter-spacing:-0.2px">1 ea</div>
<div class="t" style="left:1181px;top:446.0px;height:18px;line-height:18px;width:126px;overflow:hidden;font-size:12px;color:#222;letter-spacing:-0.75px">$4,863.46</div>
<div class="t" style="left:1313px;top:446.0px;height:18px;line-height:18px;width:86px;overflow:hidden;font-size:12px;color:#222;letter-spacing:0px">Dodosha</div>
<div class="r" style="left:276px;top:479px;width:18px;height:18px;border:2px solid #0b5c99;border-radius:2.5px;box-sizing:border-box;background:#fff0"></div>
<div class="t" style="left:305px;top:480.0px;height:18px;line-height:18px;width:44px;overflow:hidden;font-size:12px;color:#0b5c99;font-weight:700;letter-spacing:0px">DS</div>
<div class="t" style="left:355px;top:480.0px;height:18px;line-height:18px;width:126px;overflow:hidden;font-size:12px;color:#222;letter-spacing:-0.55px">Direct Sales PO</div>
<div class="t" style="left:487px;top:480.0px;height:18px;line-height:18px;width:74px;overflow:hidden;font-size:12px;color:#1a6aa5;letter-spacing:-0.2px">SO-0030459</div>
<div class="t" style="left:567px;top:480.0px;height:18px;line-height:18px;width:126px;overflow:hidden;font-size:12px;color:#222;letter-spacing:-0.2px">11/08/2022</div>
<svg class="r" style="left:811px;top:483px" width="10" height="6" viewBox="0 0 10 6"><path d="M0 0h10L5 6z" fill="#b5b5b5"/></svg>
<div class="t" style="left:831px;top:480.0px;height:18px;line-height:18px;width:126px;overflow:hidden;font-size:12px;color:#222;letter-spacing:-0.15px">Windows update</div>
<div class="t" style="left:963px;top:480.0px;height:18px;line-height:18px;width:79px;overflow:hidden;font-size:12px;color:#222;letter-spacing:-0.2px">50</div>
<div class="t" style="left:1181px;top:480.0px;height:18px;line-height:18px;width:126px;overflow:hidden;font-size:12px;color:#222;letter-spacing:-0.75px">$4,863.46</div>
<div class="t" style="left:1313px;top:480.0px;height:18px;line-height:18px;width:86px;overflow:hidden;font-size:12px;color:#222;letter-spacing:0px">Dodosha</div>
<div class="r" style="left:276px;top:513px;width:18px;height:18px;border:2px solid #0b5c99;border-radius:2.5px;box-sizing:border-box;background:#fff0"></div>
<div class="t" style="left:305px;top:514.0px;height:18px;line-height:18px;width:44px;overflow:hidden;font-size:12px;color:#0b5c99;font-weight:700;letter-spacing:0px">N-DS</div>
<div class="t" style="left:355px;top:514.0px;height:18px;line-height:18px;width:126px;overflow:hidden;font-size:12px;color:#222;letter-spacing:-0.55px">Direct Sales PO</div>
<div class="t" style="left:487px;top:514.0px;height:18px;line-height:18px;width:74px;overflow:hidden;font-size:12px;color:#1a6aa5;letter-spacing:-0.2px">SO-0030320</div>
<div class="t" style="left:567px;top:514.0px;height:18px;line-height:18px;width:126px;overflow:hidden;font-size:12px;color:#222;letter-spacing:-0.2px">11/03/2022</div>
<svg class="r" style="left:811px;top:517px" width="10" height="6" viewBox="0 0 10 6"><path d="M0 0h10L5 6z" fill="#b5b5b5"/></svg>
<div class="t" style="left:831px;top:514.0px;height:18px;line-height:18px;width:126px;overflow:hidden;font-size:12px;color:#222;letter-spacing:-0.15px">1.5 Ah Compact Batterie</div>
<div class="t" style="left:963px;top:514.0px;height:18px;line-height:18px;width:79px;overflow:hidden;font-size:12px;color:#222;letter-spacing:-0.2px">1</div>
<div class="t" style="left:1053px;top:514.0px;height:18px;line-height:18px;width:121px;overflow:hidden;font-size:12px;color:#1a6aa5;letter-spacing:-0.5px">50 / 13</div>
<div class="t" style="left:1181px;top:514.0px;height:18px;line-height:18px;width:126px;overflow:hidden;font-size:12px;color:#222;letter-spacing:-0.75px">$108.88</div>
<div class="t" style="left:1313px;top:514.0px;height:18px;line-height:18px;width:86px;overflow:hidden;font-size:12px;color:#222;letter-spacing:0px">1248 16thAve. A</div>
<div class="r" style="left:276px;top:547px;width:18px;height:18px;border:2px solid #0b5c99;border-radius:2.5px;box-sizing:border-box;background:#fff0"></div>
<div class="t" style="left:305px;top:548.0px;height:18px;line-height:18px;width:44px;overflow:hidden;font-size:12px;color:#0b5c99;font-weight:700;letter-spacing:0px">N-DS</div>
<div class="t" style="left:355px;top:548.0px;height:18px;line-height:18px;width:126px;overflow:hidden;font-size:12px;color:#222;letter-spacing:-0.55px">Direct Sales PO</div>
<div class="t" style="left:487px;top:548.0px;height:18px;line-height:18px;width:74px;overflow:hidden;font-size:12px;color:#1a6aa5;letter-spacing:-0.2px">SO-0030249</div>
<div class="t" style="left:567px;top:548.0px;height:18px;line-height:18px;width:126px;overflow:hidden;font-size:12px;color:#222;letter-spacing:-0.2px">10/31/2022</div>
<svg class="r" style="left:811px;top:551px" width="10" height="6" viewBox="0 0 10 6"><path d="M0 0h10L5 6z" fill="#b5b5b5"/></svg>
<div class="t" style="left:831px;top:548.0px;height:18px;line-height:18px;width:126px;overflow:hidden;font-size:12px;color:#222;letter-spacing:-0.15px">3030PoliNon</div>
<div class="t" style="left:963px;top:548.0px;height:18px;line-height:18px;width:79px;overflow:hidden;font-size:12px;color:#222;letter-spacing:-0.2px">51.85</div>
<div class="t" style="left:1053px;top:548.0px;height:18px;line-height:18px;width:121px;overflow:hidden;font-size:12px;color:#1a6aa5;letter-spacing:-0.5px">20 / 0</div>
<svg class="r" style="left:1096.5px;top:550.5px" width="12" height="12" viewBox="0 0 12 12"><circle cx="6" cy="6" r="5.7" fill="#c62424"/><path d="M5.35 2.6h1.3l-.25 5h-.8z" fill="#fff"/><circle cx="6" cy="9" r=".75" fill="#fff"/></svg>
<div class="t" style="left:1181px;top:548.0px;height:18px;line-height:18px;width:126px;overflow:hidden;font-size:12px;color:#222;letter-spacing:-0.75px">$6.95</div>
<div class="t" style="left:1313px;top:548.0px;height:18px;line-height:18px;width:86px;overflow:hidden;font-size:12px;color:#222;letter-spacing:0px">1248 16thAve. A</div>
<div class="r" style="left:276px;top:581px;width:18px;height:18px;border:2px solid #0b5c99;border-radius:2.5px;box-sizing:border-box;background:#fff0"></div>
<div class="t" style="left:305px;top:582.0px;height:18px;line-height:18px;width:44px;overflow:hidden;font-size:12px;color:#0b5c99;font-weight:700;letter-spacing:0px">N-DS</div>
<div class="t" style="left:355px;top:582.0px;height:18px;line-height:18px;width:126px;overflow:hidden;font-size:12px;color:#222;letter-spacing:-0.55px">Direct Sales PO</div>
<div class="t" style="left:487px;top:582.0px;height:18px;line-height:18px;width:74px;overflow:hidden;font-size:12px;color:#1a6aa5;letter-spacing:-0.2px">SO-0030246</div>
<div class="t" style="left:567px;top:582.0px;height:18px;line-height:18px;width:126px;overflow:hidden;font-size:12px;color:#222;letter-spacing:-0.2px">10/31/2022</div>
<svg class="r" style="left:811px;top:585px" width="10" height="6" viewBox="0 0 10 6"><path d="M0 0h10L5 6z" fill="#b5b5b5"/></svg>
<div class="t" style="left:831px;top:582.0px;height:18px;line-height:18px;width:126px;overflow:hidden;font-size:12px;color:#222;letter-spacing:-0.15px">SFB</div>
<div class="t" style="left:963px;top:582.0px;height:18px;line-height:18px;width:79px;overflow:hidden;font-size:12px;color:#222;letter-spacing:-0.2px">288 ea</div>
<div class="t" style="left:1053px;top:582.0px;height:18px;line-height:18px;width:121px;overflow:hidden;font-size:12px;color:#1a6aa5;letter-spacing:-0.5px">448.008 / 0.004 ea</div>
<div class="t" style="left:1181px;top:582.0px;height:18px;line-height:18px;width:126px;overflow:hidden;font-size:12px;color:#222;letter-spacing:-0.75px">$18,835.38</div>
<div class="t" style="left:1313px;top:582.0px;height:18px;line-height:18px;width:86px;overflow:hidden;font-size:12px;color:#222;letter-spacing:0px">1248 16thAve. A</div>
<div class="r" style="left:276px;top:615px;width:18px;height:18px;border:2px solid #0b5c99;border-radius:2.5px;box-sizing:border-box;background:#fff0"></div>
<div class="t" style="left:305px;top:616.0px;height:18px;line-height:18px;width:44px;overflow:hidden;font-size:12px;color:#0b5c99;font-weight:700;letter-spacing:0px">N-DS</div>
<div class="t" style="left:355px;top:616.0px;height:18px;line-height:18px;width:126px;overflow:hidden;font-size:12px;color:#222;letter-spacing:-0.55px">Auto Request</div>
<div class="t" style="left:567px;top:616.0px;height:18px;line-height:18px;width:126px;overflow:hidden;font-size:12px;color:#222;letter-spacing:-0.2px">10/31/2022</div>
<svg class="r" style="left:811px;top:619px" width="10" height="6" viewBox="0 0 10 6"><path d="M0 0h10L5 6z" fill="#b5b5b5"/></svg>
<div class="t" style="left:831px;top:616.0px;height:18px;line-height:18px;width:126px;overflow:hidden;font-size:12px;color:#222;letter-spacing:-0.15px">Razer Headphones</div>
<div class="t" style="left:963px;top:616.0px;height:18px;line-height:18px;width:79px;overflow:hidden;font-size:12px;color:#222;letter-spacing:-0.2px">2</div>
<div class="t" style="left:1053px;top:616.0px;height:18px;line-height:18px;width:121px;overflow:hidden;font-size:12px;color:#1a6aa5;letter-spacing:-0.5px">36 / 20</div>
<div class="t" style="left:1181px;top:616.0px;height:18px;line-height:18px;width:126px;overflow:hidden;font-size:12px;color:#222;letter-spacing:-0.75px">$0.00</div>
<div class="r" style="left:276px;top:649px;width:18px;height:18px;border:2px solid #0b5c99;border-radius:2.5px;box-sizing:border-box;background:#fff0"></div>
<div class="t" style="left:305px;top:650.0px;height:18px;line-height:18px;width:44px;overflow:hidden;font-size:12px;color:#0b5c99;font-weight:700;letter-spacing:0px">N-DS</div>
<div class="t" style="left:355px;top:650.0px;height:18px;line-height:18px;width:126px;overflow:hidden;font-size:12px;color:#222;letter-spacing:-0.55px">Attached To PO</div>
<div class="t" style="left:487px;top:650.0px;height:18px;line-height:18px;width:74px;overflow:hidden;font-size:12px;color:#1a6aa5;letter-spacing:-0.2px">SO-0030231</div>
<div class="t" style="left:567px;top:650.0px;height:18px;line-height:18px;width:126px;overflow:hidden;font-size:12px;color:#222;letter-spacing:-0.2px">10/31/2022</div>
<svg class="r" style="left:811px;top:653px" width="10" height="6" viewBox="0 0 10 6"><path d="M0 0h10L5 6z" fill="#b5b5b5"/></svg>
<div class="t" style="left:831px;top:650.0px;height:18px;line-height:18px;width:126px;overflow:hidden;font-size:12px;color:#222;letter-spacing:-0.15px">Razer Headphones</div>
<div class="t" style="left:963px;top:650.0px;height:18px;line-height:18px;width:79px;overflow:hidden;font-size:12px;color:#222;letter-spacing:-0.2px">5</div>
<div class="t" style="left:1053px;top:650.0px;height:18px;line-height:18px;width:121px;overflow:hidden;font-size:12px;color:#1a6aa5;letter-spacing:-0.5px">36 / 20</div>
<div class="t" style="left:1181px;top:650.0px;height:18px;line-height:18px;width:126px;overflow:hidden;font-size:12px;color:#222;letter-spacing:-0.75px">$54.44</div>
<div class="t" style="left:1313px;top:650.0px;height:18px;line-height:18px;width:86px;overflow:hidden;font-size:12px;color:#222;letter-spacing:0px">1248 16thAve. A</div>
<div class="r" style="left:276px;top:683px;width:18px;height:18px;border:2px solid #0b5c99;border-radius:2.5px;box-sizing:border-box;background:#fff0"></div>
<div class="t" style="left:305px;top:684.0px;height:18px;line-height:18px;width:44px;overflow:hidden;font-size:12px;color:#0b5c99;font-weight:700;letter-spacing:0px">N-DS</div>
<div class="t" style="left:355px;top:684.0px;height:18px;line-height:18px;width:126px;overflow:hidden;font-size:12px;color:#222;letter-spacing:-0.55px">Auto Request</div>
<div class="t" style="left:567px;top:684.0px;height:18px;line-height:18px;width:126px;overflow:hidden;font-size:12px;color:#222;letter-spacing:-0.2px">10/31/2022</div>
<svg class="r" style="left:811px;top:687px" width="10" height="6" viewBox="0 0 10 6"><path d="M0 0h10L5 6z" fill="#b5b5b5"/></svg>
<div class="t" style="left:831px;top:684.0px;height:18px;line-height:18px;width:126px;overflow:hidden;font-size:12px;color:#222;letter-spacing:-0.15px">Razer Chroma Mercury I</div>
<div class="t" style="left:963px;top:684.0px;height:18px;line-height:18px;width:79px;overflow:hidden;font-size:12px;color:#222;letter-spacing:-0.2px">90 ea</div>
<div class="t" style="left:1053px;top:684.0px;height:18px;line-height:18px;width:121px;overflow:hidden;font-size:12px;color:#1a6aa5;letter-spacing:-0.5px">112 / -6 ea</div>
<div class="t" style="left:1181px;top:684.0px;height:18px;line-height:18px;width:126px;overflow:hidden;font-size:12px;color:#222;letter-spacing:-0.75px">$0.00</div>
<div class="r" style="left:276px;top:717px;width:18px;height:18px;border:2px solid #0b5c99;border-radius:2.5px;box-sizing:border-box;background:#fff0"></div>
<div class="t" style="left:305px;top:718.0px;height:18px;line-height:18px;width:44px;overflow:hidden;font-size:12px;color:#0b5c99;font-weight:700;letter-spacing:0px">N-DS</div>
<div class="t" style="left:355px;top:718.0px;height:18px;line-height:18px;width:126px;overflow:hidden;font-size:12px;color:#222;letter-spacing:-0.55px">Attached To PO</div>
<div class="t" style="left:487px;top:718.0px;height:18px;line-height:18px;width:74px;overflow:hidden;font-size:12px;color:#1a6aa5;letter-spacing:-0.2px">SO-0030231</div>
<div class="t" style="left:567px;top:718.0px;height:18px;line-height:18px;width:126px;overflow:hidden;font-size:12px;color:#222;letter-spacing:-0.2px">10/31/2022</div>
<svg class="r" style="left:811px;top:721px" width="10" height="6" viewBox="0 0 10 6"><path d="M0 0h10L5 6z" fill="#b5b5b5"/></svg>
<div class="t" style="left:831px;top:718.0px;height:18px;line-height:18px;width:126px;overflow:hidden;font-size:12px;color:#222;letter-spacing:-0.15px">Razer Chroma Mercury I</div>
<div class="t" style="left:963px;top:718.0px;height:18px;line-height:18px;width:79px;overflow:hidden;font-size:12px;color:#222;letter-spacing:-0.2px">200 ea</div>
<div class="t" style="left:1053px;top:718.0px;height:18px;line-height:18px;width:121px;overflow:hidden;font-size:12px;color:#1a6aa5;letter-spacing:-0.5px">112 / -6 ea</div>
<div class="t" style="left:1181px;top:718.0px;height:18px;line-height:18px;width:126px;overflow:hidden;font-size:12px;color:#222;letter-spacing:-0.75px">$54.44</div>
<div class="t" style="left:1313px;top:718.0px;height:18px;line-height:18px;width:86px;overflow:hidden;font-size:12px;color:#222;letter-spacing:0px">1248 16thAve. A</div>
<div class="r" style="left:276px;top:751px;width:18px;height:18px;border:2px solid #0b5c99;border-radius:2.5px;box-sizing:border-box;background:#fff0"></div>
<div class="t" style="left:305px;top:752.0px;height:18px;line-height:18px;width:44px;overflow:hidden;font-size:12px;color:#0b5c99;font-weight:700;letter-spacing:0px">DS</div>
<div class="t" style="left:355px;top:752.0px;height:18px;line-height:18px;width:126px;overflow:hidden;font-size:12px;color:#222;letter-spacing:-0.55px">Direct Sales PO</div>
<div class="t" style="left:487px;top:752.0px;height:18px;line-height:18px;width:74px;overflow:hidden;font-size:12px;color:#1a6aa5;letter-spacing:-0.2px">SO-0030160</div>
<div class="t" style="left:567px;top:752.0px;height:18px;line-height:18px;width:126px;overflow:hidden;font-size:12px;color:#222;letter-spacing:-0.2px">10/27/2022</div>
<svg class="r" style="left:811px;top:755px" width="10" height="6" viewBox="0 0 10 6"><path d="M0 0h10L5 6z" fill="#b5b5b5"/></svg>
<div class="t" style="left:831px;top:752.0px;height:18px;line-height:18px;width:126px;overflow:hidden;font-size:12px;color:#222;letter-spacing:-0.15px">0316</div>
<div class="t" style="left:963px;top:752.0px;height:18px;line-height:18px;width:79px;overflow:hidden;font-size:12px;color:#222;letter-spacing:-0.2px">5 ea</div>
<div class="t" style="left:1053px;top:752.0px;height:18px;line-height:18px;width:121px;overflow:hidden;font-size:12px;color:#1a6aa5;letter-spacing:-0.5px">124 / 64 ea</div>
<div class="t" style="left:1181px;top:752.0px;height:18px;line-height:18px;width:126px;overflow:hidden;font-size:12px;color:#222;letter-spacing:-0.75px">$104.44</div>
<div class="t" style="left:1313px;top:752.0px;height:18px;line-height:18px;width:86px;overflow:hidden;font-size:12px;color:#222;letter-spacing:0px">1248 16thAve. A</div>
<div class="r" style="left:276px;top:786px;width:18px;height:18px;border:2px solid #0b5c99;border-radius:2.5px;box-sizing:border-box;background:#fff0"></div>
<div class="t" style="left:305px;top:786.0px;height:18px;line-height:18px;width:44px;overflow:hidden;font-size:12px;color:#0b5c99;font-weight:700;letter-spacing:0px">N-DS</div>
<div class="t" style="left:355px;top:786.0px;height:18px;line-height:18px;width:126px;overflow:hidden;font-size:12px;color:#222;letter-spacing:-0.55px">Direct Sales PO</div>
<div class="t" style="left:487px;top:786.0px;height:18px;line-height:18px;width:74px;overflow:hidden;font-size:12px;color:#1a6aa5;letter-spacing:-0.2px">SO-0030148</div>
<div class="t" style="left:567px;top:786.0px;height:18px;line-height:18px;width:126px;overflow:hidden;font-size:12px;color:#222;letter-spacing:-0.2px">10/26/2022</div>
<svg class="r" style="left:811px;top:789px" width="10" height="6" viewBox="0 0 10 6"><path d="M0 0h10L5 6z" fill="#b5b5b5"/></svg>
<div class="t" style="left:831px;top:786.0px;height:18px;line-height:18px;width:126px;overflow:hidden;font-size:12px;color:#222;letter-spacing:-0.15px">020714236298</div>
<div class="t" style="left:963px;top:786.0px;height:18px;line-height:18px;width:79px;overflow:hidden;font-size:12px;color:#222;letter-spacing:-0.2px">1</div>
<div class="t" style="left:1053px;top:786.0px;height:18px;line-height:18px;width:121px;overflow:hidden;font-size:12px;color:#1a6aa5;letter-spacing:-0.5px">743 / 271</div>
<div class="t" style="left:1181px;top:786.0px;height:18px;line-height:18px;width:126px;overflow:hidden;font-size:12px;color:#222;letter-spacing:-0.75px">$32.66</div>
<div class="t" style="left:1313px;top:778.0px;height:18px;line-height:18px;width:86px;overflow:hidden;font-size:12px;color:#222;letter-spacing:0px">=++test</div>
<div class="t" style="left:1313px;top:794.0px;height:18px;line-height:18px;width:86px;overflow:hidden;font-size:12px;color:#222;letter-spacing:0px">castomerpiopiop</div>
<div class="r" style="left:276px;top:821px;width:18px;height:18px;border:2px solid #0b5c99;border-radius:2.5px;box-sizing:border-box;background:#fff0"></div>
<div class="t" style="left:305px;top:821.0px;height:18px;line-height:18px;width:44px;overflow:hidden;font-size:12px;color:#0b5c99;font-weight:700;letter-spacing:0px">DS</div>
<div class="t" style="left:355px;top:821.0px;height:18px;line-height:18px;width:126px;overflow:hidden;font-size:12px;color:#222;letter-spacing:-0.55px">Direct Sales PO</div>
<div class="t" style="left:487px;top:821.0px;height:18px;line-height:18px;width:74px;overflow:hidden;font-size:12px;color:#1a6aa5;letter-spacing:-0.2px">SO-0030138</div>
<div class="t" style="left:567px;top:821.0px;height:18px;line-height:18px;width:126px;overflow:hidden;font-size:12px;color:#222;letter-spacing:-0.2px">10/26/2022</div>
<svg class="r" style="left:811px;top:824px" width="10" height="6" viewBox="0 0 10 6"><path d="M0 0h10L5 6z" fill="#b5b5b5"/></svg>
<div class="t" style="left:831px;top:821.0px;height:18px;line-height:18px;width:126px;overflow:hidden;font-size:12px;color:#222;letter-spacing:-0.15px">hel item 1</div>
<div class="t" style="left:963px;top:821.0px;height:18px;line-height:18px;width:79px;overflow:hidden;font-size:12px;color:#222;letter-spacing:-0.2px">1</div>
<div class="t" style="left:1053px;top:821.0px;height:18px;line-height:18px;width:121px;overflow:hidden;font-size:12px;color:#1a6aa5;letter-spacing:-0.5px">2642 / 563</div>
<div class="t" style="left:1181px;top:821.0px;height:18px;line-height:18px;width:126px;overflow:hidden;font-size:12px;color:#222;letter-spacing:-0.75px">$0.00</div>
<div class="t" style="left:1313px;top:821.0px;height:18px;line-height:18px;width:86px;overflow:hidden;font-size:12px;color:#222;letter-spacing:-0.8px">KLEIN</div>
<div class="r" style="left:276px;top:855px;width:18px;height:18px;border:2px solid #0b5c99;border-radius:2.5px;box-sizing:border-box;background:#fff0"></div>
<div class="t" style="left:305px;top:855.0px;height:18px;line-height:18px;width:44px;overflow:hidden;font-size:12px;color:#0b5c99;font-weight:700;letter-spacing:0px">N-DS</div>
<div class="t" style="left:355px;top:855.0px;height:18px;line-height:18px;width:126px;overflow:hidden;font-size:12px;color:#222;letter-spacing:-0.55px">Auto Request</div>
<div class="t" style="left:567px;top:855.0px;height:18px;line-height:18px;width:126px;overflow:hidden;font-size:12px;color:#222;letter-spacing:-0.2px">10/24/2022</div>
<div class="t" style="left:706px;top:853.0px;height:18px;line-height:18px;width:104px;overflow:hidden;font-size:12px;color:#222;letter-spacing:-0.2px">dubok</div>
<svg class="r" style="left:811px;top:858px" width="10" height="6" viewBox="0 0 10 6"><path d="M0 0h10L5 6z" fill="#b5b5b5"/></svg>
<div class="t" style="left:831px;top:855.0px;height:18px;line-height:18px;width:126px;overflow:hidden;font-size:12px;color:#222;letter-spacing:-0.15px">Wood</div>
<div class="t" style="left:963px;top:855.0px;height:18px;line-height:18px;width:79px;overflow:hidden;font-size:12px;color:#222;letter-spacing:-0.2px">100</div>
<div class="t" style="left:1053px;top:855.0px;height:18px;line-height:18px;width:121px;overflow:hidden;font-size:12px;color:#1a6aa5;letter-spacing:-0.5px">0 / 0</div>
<svg class="r" style="left:1090.5px;top:858.5px" width="12" height="12" viewBox="0 0 12 12"><circle cx="6" cy="6" r="5.7" fill="#c62424"/><path d="M5.35 2.6h1.3l-.25 5h-.8z" fill="#fff"/><circle cx="6" cy="9" r=".75" fill="#fff"/></svg>
<div class="t" style="left:1181px;top:855.0px;height:18px;line-height:18px;width:126px;overflow:hidden;font-size:12px;color:#222;letter-spacing:-0.75px">$0.00</div>
<div class="r" style="left:276px;top:889px;width:18px;height:18px;border:2px solid #0b5c99;border-radius:2.5px;box-sizing:border-box;background:#fff0"></div>
<div class="t" style="left:305px;top:889.0px;height:18px;line-height:18px;width:44px;overflow:hidden;font-size:12px;color:#0b5c99;font-weight:700;letter-spacing:0px">N-DS</div>
<div class="t" style="left:355px;top:889.0px;height:18px;line-height:18px;width:126px;overflow:hidden;font-size:12px;color:#222;letter-spacing:-0.55px">Direct Sales PO</div>
<div class="t" style="left:487px;top:889.0px;height:18px;line-height:18px;width:74px;overflow:hidden;font-size:12px;color:#1a6aa5;letter-spacing:-0.2px">SO-0030019</div>
<div class="t" style="left:567px;top:889.0px;height:18px;line-height:18px;width:126px;overflow:hidden;font-size:12px;color:#222;letter-spacing:-0.2px">10/18/2022</div>
<svg class="r" style="left:811px;top:892px" width="10" height="6" viewBox="0 0 10 6"><path d="M0 0h10L5 6z" fill="#b5b5b5"/></svg>
<div class="t" style="left:831px;top:889.0px;height:18px;line-height:18px;width:126px;overflow:hidden;font-size:12px;color:#222;letter-spacing:-0.15px">0316</div>
<div class="t" style="left:963px;top:889.0px;height:18px;line-height:18px;width:79px;overflow:hidden;font-size:12px;color:#222;letter-spacing:-0.2px">1 ea</div>
<div class="t" style="left:1053px;top:889.0px;height:18px;line-height:18px;width:121px;overflow:hidden;font-size:12px;color:#1a6aa5;letter-spacing:-0.5px">124 / 64 ea</div>
<div class="t" style="left:1181px;top:889.0px;height:18px;line-height:18px;width:126px;overflow:hidden;font-size:12px;color:#222;letter-spacing:-0.75px">$0.00</div>
<div class="t" style="left:1313px;top:889.0px;height:18px;line-height:18px;width:86px;overflow:hidden;font-size:12px;color:#222;letter-spacing:-0.5px">7184582587</div>
<div class="r" style="left:276px;top:923px;width:18px;height:18px;border:2px solid #0b5c99;border-radius:2.5px;box-sizing:border-box;background:#fff0"></div>
<div class="t" style="left:305px;top:923.0px;height:18px;line-height:18px;width:44px;overflow:hidden;font-size:12px;color:#0b5c99;font-weight:700;letter-spacing:0px">DS</div>
<div class="t" style="left:355px;top:923.0px;height:18px;line-height:18px;width:126px;overflow:hidden;font-size:12px;color:#222;letter-spacing:-0.55px">Direct Sales PO</div>
<div class="t" style="left:487px;top:923.0px;height:18px;line-height:18px;width:74px;overflow:hidden;font-size:12px;color:#1a6aa5;letter-spacing:-0.2px">SO-0030019</div>
<div class="t" style="left:567px;top:923.0px;height:18px;line-height:18px;width:126px;overflow:hidden;font-size:12px;color:#222;letter-spacing:-0.2px">10/18/2022</div>
<svg class="r" style="left:811px;top:926px" width="10" height="6" viewBox="0 0 10 6"><path d="M0 0h10L5 6z" fill="#b5b5b5"/></svg>
<div class="t" style="left:831px;top:923.0px;height:18px;line-height:18px;width:126px;overflow:hidden;font-size:12px;color:#222;letter-spacing:-0.15px">0316</div>
<div class="t" style="left:963px;top:923.0px;height:18px;line-height:18px;width:79px;overflow:hidden;font-size:12px;color:#222;letter-spacing:-0.2px">1 ea</div>
<div class="t" style="left:1053px;top:923.0px;height:18px;line-height:18px;width:121px;overflow:hidden;font-size:12px;color:#1a6aa5;letter-spacing:-0.5px">124 / 64 ea</div>
<div class="t" style="left:1181px;top:923.0px;height:18px;line-height:18px;width:126px;overflow:hidden;font-size:12px;color:#222;letter-spacing:-0.75px">$0.00</div>
<div class="t" style="left:1313px;top:923.0px;height:18px;line-height:18px;width:86px;overflow:hidden;font-size:12px;color:#222;letter-spacing:-0.5px">7184582587</div>
<div class="r" style="left:276px;top:957px;width:18px;height:18px;border:2px solid #0b5c99;border-radius:2.5px;box-sizing:border-box;background:#fff0"></div>
<div class="t" style="left:305px;top:957.0px;height:18px;line-height:18px;width:44px;overflow:hidden;font-size:12px;color:#0b5c99;font-weight:700;letter-spacing:0px">N-DS</div>
<div class="t" style="left:355px;top:957.0px;height:18px;line-height:18px;width:126px;overflow:hidden;font-size:12px;color:#222;letter-spacing:-0.55px">Direct Sales PO</div>
<div class="t" style="left:487px;top:957.0px;height:18px;line-height:18px;width:74px;overflow:hidden;font-size:12px;color:#1a6aa5;letter-spacing:-0.2px">SO-0029973</div>
<div class="t" style="left:567px;top:957.0px;height:18px;line-height:18px;width:126px;overflow:hidden;font-size:12px;color:#222;letter-spacing:-0.2px">10/14/2022</div>
<svg class="r" style="left:811px;top:960px" width="10" height="6" viewBox="0 0 10 6"><path d="M0 0h10L5 6z" fill="#b5b5b5"/></svg>
<div class="t" style="left:831px;top:957.0px;height:18px;line-height:18px;width:126px;overflow:hidden;font-size:12px;color:#222;letter-spacing:-0.15px">Paint</div>
<div class="t" style="left:963px;top:957.0px;height:18px;line-height:18px;width:79px;overflow:hidden;font-size:12px;color:#222;letter-spacing:-0.2px">5 ea</div>
<div class="t" style="left:1181px;top:957.0px;height:18px;line-height:18px;width:126px;overflow:hidden;font-size:12px;color:#222;letter-spacing:-0.75px">$1,121.00</div>
<div class="t" style="left:1313px;top:957.0px;height:18px;line-height:18px;width:86px;overflow:hidden;font-size:12px;color:#222;letter-spacing:0px">1248 16thAve. A</div>
<div class="r" style="left:276px;top:991px;width:18px;height:18px;border:2px solid #0b5c99;border-radius:2.5px;box-sizing:border-box;background:#fff0"></div>
<div class="t" style="left:305px;top:991.0px;height:18px;line-height:18px;width:44px;overflow:hidden;font-size:12px;color:#0b5c99;font-weight:700;letter-spacing:0px">N-DS</div>
<div class="t" style="left:355px;top:991.0px;height:18px;line-height:18px;width:126px;overflow:hidden;font-size:12px;color:#222;letter-spacing:-0.55px">Direct Sales PO</div>
<div class="t" style="left:487px;top:991.0px;height:18px;line-height:18px;width:74px;overflow:hidden;font-size:12px;color:#1a6aa5;letter-spacing:-0.2px">SO-0029973</div>
<div class="t" style="left:567px;top:991.0px;height:18px;line-height:18px;width:126px;overflow:hidden;font-size:12px;color:#222;letter-spacing:-0.2px">10/14/2022</div>
<svg class="r" style="left:811px;top:994px" width="10" height="6" viewBox="0 0 10 6"><path d="M0 0h10L5 6z" fill="#b5b5b5"/></svg>
<div class="t" style="left:831px;top:991.0px;height:18px;line-height:18px;width:126px;overflow:hidden;font-size:12px;color:#222;letter-spacing:-0.15px">livi</div>
<div class="t" style="left:963px;top:991.0px;height:18px;line-height:18px;width:79px;overflow:hidden;font-size:12px;color:#222;letter-spacing:-0.2px">5</div>
<div class="t" style="left:1181px;top:991.0px;height:18px;line-height:18px;width:126px;overflow:hidden;font-size:12px;color:#222;letter-spacing:-0.75px">$1,121.00</div>
<div class="t" style="left:1313px;top:991.0px;height:18px;line-height:18px;width:86px;overflow:hidden;font-size:12px;color:#222;letter-spacing:0px">1248 16thAve. A</div>
<div class="r" style="left:276px;top:1025px;width:18px;height:18px;border:2px solid #0b5c99;border-radius:2.5px;box-sizing:border-box;background:#fff0"></div>
<div class="t" style="left:305px;top:1025.0px;height:18px;line-height:18px;width:44px;overflow:hidden;font-size:12px;color:#0b5c99;font-weight:700;letter-spacing:0px">DS</div>
<div class="t" style="left:355px;top:1025.0px;height:18px;line-height:18px;width:126px;overflow:hidden;font-size:12px;color:#222;letter-spacing:-0.55px">Direct Sales PO</div>
<div class="t" style="left:487px;top:1025.0px;height:18px;line-height:18px;width:74px;overflow:hidden;font-size:12px;color:#1a6aa5;letter-spacing:-0.2px">SO-0029972</div>
<div class="t" style="left:567px;top:1025.0px;height:18px;line-height:18px;width:126px;overflow:hidden;font-size:12px;color:#222;letter-spacing:-0.2px">10/14/2022</div>
<svg class="r" style="left:811px;top:1028px" width="10" height="6" viewBox="0 0 10 6"><path d="M0 0h10L5 6z" fill="#b5b5b5"/></svg>
<div class="t" style="left:831px;top:1025.0px;height:18px;line-height:18px;width:126px;overflow:hidden;font-size:12px;color:#222;letter-spacing:-0.15px">Paint</div>
<div class="t" style="left:963px;top:1025.0px;height:18px;line-height:18px;width:79px;overflow:hidden;font-size:12px;color:#222;letter-spacing:-0.2px">1 ea</div>
<div class="t" style="left:1181px;top:1025.0px;height:18px;line-height:18px;width:126px;overflow:hidden;font-size:12px;color:#222;letter-spacing:-0.75px">$3,199.15</div>
<div class="t" style="left:1313px;top:1025.0px;height:18px;line-height:18px;width:86px;overflow:hidden;font-size:12px;color:#222;letter-spacing:0px">1248 16thAve. A</div>
<div class="r" style="left:1400px;top:159px;width:519px;height:880px;background:#ffffff;"></div>
<div class="r" style="left:1400px;top:159px;width:1px;height:880px;background:#c6c6c6;"></div>
<div class="r" style="left:1401px;top:159px;width:518px;height:1px;background:#d0d0d0;"></div>
<svg class="r" style="left:1410px;top:171px" width="18" height="16" viewBox="0 0 18 16"><path d="M2 7.9H16.8M7.4 2.5L1.9 7.9L7.4 13.3" fill="none" stroke="#0b5c99" stroke-width="2"/></svg>
<div class="t" style="left:1439.5px;top:168.3px;height:24px;line-height:24px;font-size:16px;color:#1a1a1a;letter-spacing:-0.149px;">Delete Purchase Order Requests</div>
<div class="r" style="left:1401px;top:196px;width:518px;height:1px;background:#e8e8e8;"></div>
<div class="t" style="left:1417px;top:213.7px;height:18px;line-height:18px;font-size:12.5px;color:#333;letter-spacing:-0.3px;-webkit-text-stroke:0.25px #333;">CHOOSE ACTION:</div>
<svg class="r" style="left:1417px;top:242px" width="14" height="14" viewBox="0 0 14 14"><circle cx="7" cy="7" r="6" fill="#fff" stroke="#1a6aa5" stroke-width="1.3"/></svg>
<div class="t" style="left:1435.5px;top:240.0px;height:18px;line-height:18px;font-size:12px;color:#222;letter-spacing:-0.25px;">Void Qty from Sale Order</div>
<svg class="r" style="left:1417px;top:265px" width="14" height="14" viewBox="0 0 14 14"><circle cx="7" cy="7" r="6" fill="#fff" stroke="#1a6aa5" stroke-width="1.3"/></svg>
<div class="t" style="left:1435.5px;top:263.0px;height:18px;line-height:18px;font-size:12px;color:#222;letter-spacing:-0.25px;">Unreserve from Sale order</div>
<svg class="r" style="left:1417px;top:288px" width="14" height="14" viewBox="0 0 14 14"><circle cx="7" cy="7" r="6" fill="#fff" stroke="#1a6aa5" stroke-width="1.3"/><circle cx="7" cy="7" r="3.6" fill="#0b5c99"/></svg>
<div class="t" style="left:1435.5px;top:285.5px;height:18px;line-height:18px;font-size:12px;color:#222;letter-spacing:-0.25px;">Delete qty from SO</div>
<div class="r" style="left:1433px;top:287px;width:461px;height:15px;border:1px dotted #b5b5b5;box-sizing:border-box"></div>
<div class="t" style="left:1417px;top:323.5px;height:17px;line-height:17px;font-size:11.5px;color:#666;letter-spacing:-1.013px;">REASON</div>
<div class="t" style="left:1460.5px;top:318.5px;height:25px;line-height:25px;font-size:17px;color:#e04040;font-weight:700;">*</div>
<div class="r" style="left:1417px;top:342px;width:479px;height:100px;background:#f3f3f3;border:1px solid #e6e6e6;box-sizing:border-box;border-radius:2px"></div>
<div class="t" style="left:1423.5px;top:348.0px;height:18px;line-height:18px;font-size:12.5px;color:#a9a9a9;letter-spacing:-0.849px;">Reason</div>
<div class="r" style="left:1401px;top:458px;width:518px;height:2px;background:#eeeeee;"></div>
<div class="r" style="left:1659px;top:460px;width:2px;height:522px;background:#eeeeee;"></div>
<div class="t" style="left:1409px;top:473.5px;height:18px;line-height:18px;font-size:12px;color:#222;font-weight:700;letter-spacing:-0.3px;">Related Documents</div>
<svg class="r" style="left:1669px;top:475px" width="14" height="16" viewBox="0 0 14 16"><path d="M3.5 7V5a3.5 3.5 0 0 1 7 0v2" fill="none" stroke="#d32f2f" stroke-width="2"/><rect x="1" y="7" width="12" height="9" rx="1.5" fill="#d32f2f"/><rect x="6" y="9.5" width="2" height="3.5" fill="#fff"/></svg>
<div class="t" style="left:1689px;top:473.5px;height:18px;line-height:18px;font-size:12px;color:#222;font-weight:700;letter-spacing:-0.3px;">Blocking Documents</div>
<div class="t" style="left:1409px;top:503.5px;height:18px;line-height:18px;font-size:12px;color:#1a6aa5;letter-spacing:-0.25px;">SO-0031183</div>
<div class="t" style="left:1509px;top:503.5px;height:18px;line-height:18px;font-size:12px;color:#f08a1c;letter-spacing:-0.25px;">Pending PO</div>
<div class="r" style="left:1401px;top:982px;width:518px;height:2px;background:#eeeeee;"></div>
<div class="r" style="left:1417px;top:999.5px;width:75px;height:25px;background:#ededed;"></div>
<div class="t" style="left:1432.7px;top:1004.0px;height:18px;line-height:18px;font-size:12.5px;color:#0b5c99;letter-spacing:-1.12px;">CANCEL</div>
<div class="r" style="left:1816px;top:999.5px;width:88px;height:25px;background:#0a5e9a;border-radius:1px"></div>
<div class="t" style="left:1831px;top:1004.0px;height:18px;line-height:18px;font-size:12.5px;color:#fff;letter-spacing:-0.91px;">CONTINUE</div>
<svg class="r" style="left:1330px;top:228px" width="90" height="65" viewBox="0 0 90 65"><path d="M8 7L74 51" stroke="#ff0000" stroke-width="2.4" stroke-linecap="round"/><path d="M82.5 57L68 52.5L74.5 46z" fill="#ff0000"/></svg>
</body></html>
